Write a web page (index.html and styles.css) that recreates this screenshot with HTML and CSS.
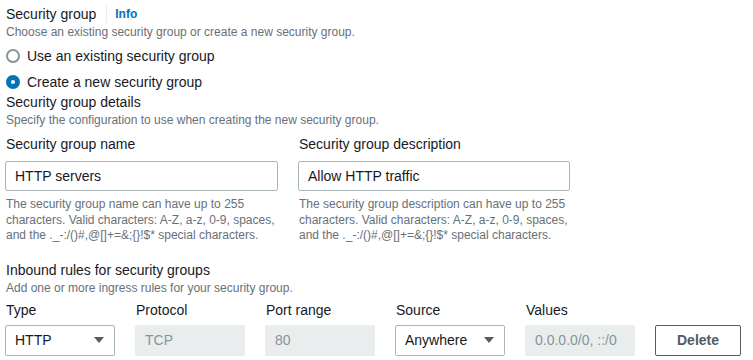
FILE: index.html
```html
<!DOCTYPE html>
<html lang="en">
<head>
  <meta charset="UTF-8">
  <title>Security group</title>
  <link rel="stylesheet" href="styles.css">
</head>
<body>
  <div class="form">
    <div class="title-row">
      <span class="title">Security group</span>
      <span class="divider"></span>
      <a class="info" href="#">Info</a>
    </div>
    <div class="desc">Choose an existing security group or create a new security group.</div>

    <div class="radios">
      <label class="radio"><span class="dot"></span>Use an existing security group</label>
      <label class="radio"><span class="dot checked"></span>Create a new security group</label>
    </div>

    <div class="section-title">Security group details</div>
    <div class="desc">Specify the configuration to use when creating the new security group.</div>

    <div class="fields">
      <div class="field">
        <div class="label">Security group name</div>
        <div class="input">HTTP servers</div>
        <div class="help">The security group name can have up to 255 characters. Valid characters: A-Z, a-z, 0-9, spaces, and the ._-:/()#,@[]+=&amp;;{}!$* special characters.</div>
      </div>
      <div class="field">
        <div class="label">Security group description</div>
        <div class="input">Allow HTTP traffic</div>
        <div class="help">The security group description can have up to 255 characters. Valid characters: A-Z, a-z, 0-9, spaces, and the ._-:/()#,@[]+=&amp;;{}!$* special characters.</div>
      </div>
    </div>

    <div class="section-title inbound">Inbound rules for security groups</div>
    <div class="desc">Add one or more ingress rules for your security group.</div>

    <div class="rules">
      <div class="col-label">Type</div>
      <div class="col-label">Protocol</div>
      <div class="col-label">Port range</div>
      <div class="col-label">Source</div>
      <div class="col-label">Values</div>
      <div></div>

      <div class="select">HTTP<span class="caret"></span></div>
      <div class="box disabled">TCP</div>
      <div class="box disabled">80</div>
      <div class="select">Anywhere<span class="caret"></span></div>
      <div class="box disabled">0.0.0.0/0, ::/0</div>
      <button class="delete">Delete</button>
    </div>
  </div>
</body>
</html>
```

FILE: styles.css
```css
body {
  margin: 0;
  padding: 0;
  background: #fff;
  font-family: "Liberation Sans", Arial, sans-serif;
  color: #16191f;
}
.form {
  padding: 4px 0 0 5px;
}
.title-row {
  display: flex;
  align-items: center;
  height: 20px;
  font-size: 14px;
  padding-left: 1px;
}
.divider {
  width: 1px;
  height: 18px;
  background: #eaeded;
  margin: 0 8px 0 10px;
}
.info {
  color: #0073bb;
  font-weight: bold;
  font-size: 12px;
  text-decoration: none;
}
.desc {
  font-size: 12px;
  line-height: 16px;
  color: #687078;
  padding-left: 1px;
}
.radios {
  display: flex;
  flex-direction: column;
  gap: 6px;
  margin-top: 6px;
}
.radio {
  display: flex;
  align-items: center;
  height: 20px;
  font-size: 14px;
  padding-left: 1px;
}
.dot {
  width: 14px;
  height: 14px;
  box-sizing: border-box;
  border: 2px solid #879596;
  border-radius: 50%;
  margin-right: 7px;
}
.dot.checked {
  border: 5px solid #0073bb;
}
.section-title {
  font-size: 14px;
  line-height: 20px;
  padding-left: 1px;
}
.fields {
  display: grid;
  grid-template-columns: 273px 272px;
  column-gap: 20px;
  margin-top: 6px;
}
.label {
  font-size: 14px;
  line-height: 20px;
  padding-left: 1px;
}
.input {
  margin-top: 7px;
  height: 30px;
  box-sizing: border-box;
  border: 1px solid #aab7b8;
  border-radius: 2px;
  padding: 0 9px;
  font-size: 14px;
  line-height: 28px;
}
.help {
  margin-top: 6px;
  font-size: 12px;
  line-height: 15.5px;
  color: #687078;
  padding-left: 1px;
}
.inbound {
  margin-top: 16px;
}
.rules {
  display: grid;
  grid-template-columns: repeat(5, 110px) 86px;
  column-gap: 20px;
  margin-top: 4px;
}
.col-label {
  font-size: 14px;
  line-height: 20px;
  padding-left: 1px;
  margin-bottom: 5px;
}
.select, .box, .delete {
  height: 31px;
  box-sizing: border-box;
  border: 1px solid #aab7b8;
  border-radius: 2px;
  font-size: 14px;
  line-height: 29px;
  padding: 0 9px;
}
.select {
  display: flex;
  justify-content: space-between;
  align-items: center;
}
.caret {
  width: 0;
  height: 0;
  border-left: 5px solid transparent;
  border-right: 5px solid transparent;
  border-top: 6px solid #545b64;
  margin-right: 1px;
}
.box.disabled {
  background: #eaeded;
  border-color: #eaeded;
  color: #879596;
}
.delete {
  background: #fff;
  border-color: #545b64;
  color: #545b64;
  font-family: inherit;
  font-weight: bold;
  text-align: center;
}
```
